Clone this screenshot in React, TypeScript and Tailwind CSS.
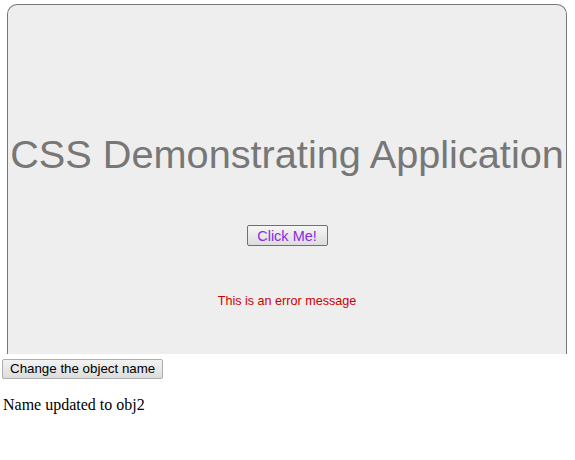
export default function App() {
  return (
    <div className="min-h-[460px] bg-white font-['Liberation_Sans',Arial,sans-serif]">
      <div className="pl-[7px] pr-2 pt-1">
        <div className="flex h-[350px] flex-col items-center rounded-t-[10px] border border-b-0 border-[#777] bg-[#eeeeee]">
          <h1 className="mt-[127px] whitespace-nowrap text-[39.7px] leading-[44px] text-[#777]">
            CSS Demonstrating Application
          </h1>
          <button className="mt-[49px] h-[21px] w-[81px] rounded-[2px] border border-[#707070] bg-gradient-to-b from-[#f6f6f6] to-[#dcdcdc] text-[14.5px] leading-[18px] text-[#8a2be2]">
            Click Me!
          </button>
          <p className="mt-[48px] text-[12.6px] leading-[14px] text-[#cc0000]">This is an error message</p>
        </div>
      </div>
      <div className="flex pl-[2px] pt-[5px]">
        <button className="h-[20px] rounded-[2px] border border-[#adadad] bg-gradient-to-b from-[#f2f2f2] to-[#dddddd] px-[7px] text-[13.33px] leading-[16px] text-black">
          Change the object name
        </button>
      </div>
      <p className="mt-[17px] pl-[3px] font-['Liberation_Serif','Times_New_Roman',serif] text-[16px] leading-[18px] text-black">
        Name updated to obj2
      </p>
    </div>
  );
}
